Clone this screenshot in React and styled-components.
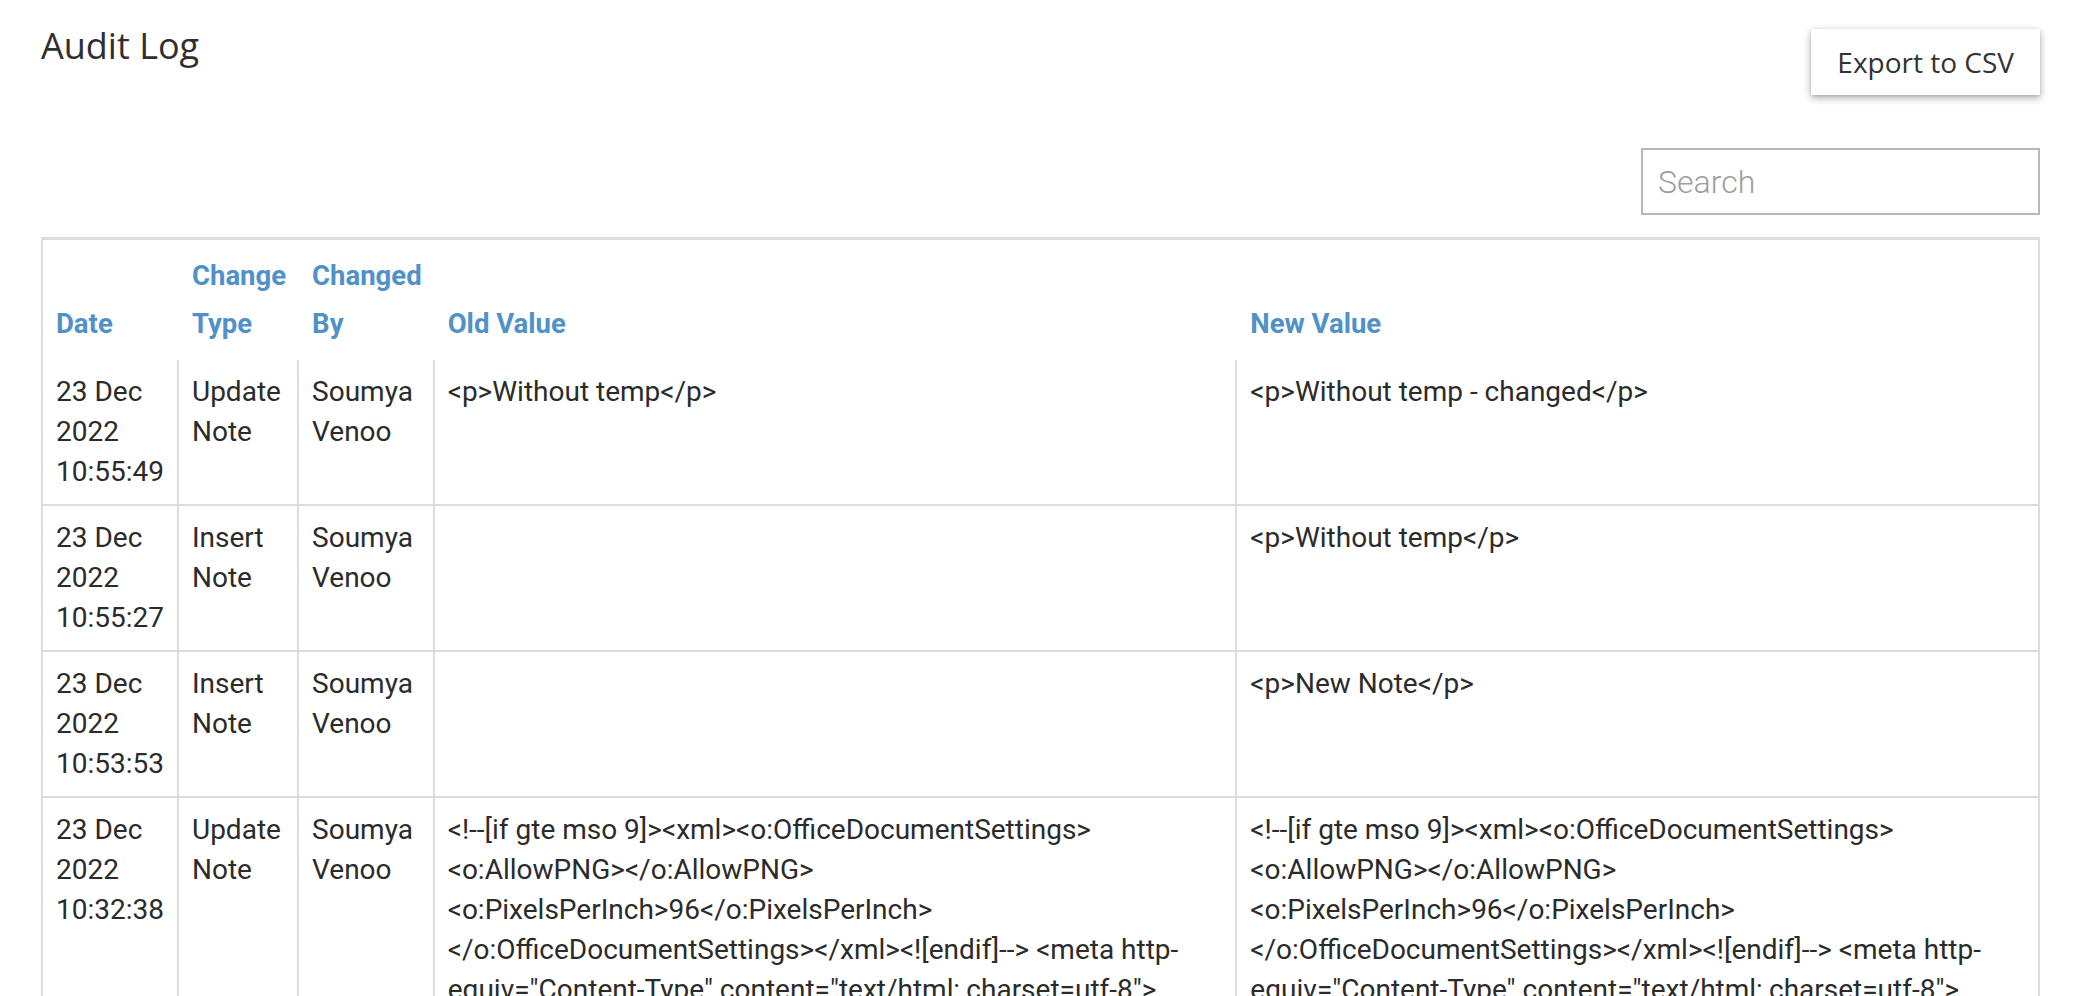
import React from "react";
import styled, { createGlobalStyle } from "styled-components";

const GlobalStyle = createGlobalStyle`
  html, body {
    margin: 0;
    padding: 0;
    background: #fff;
  }
  body {
    font-family: Roboto, "Liberation Sans", sans-serif;
    color: #333;
  }
`;

const Page = styled.div`
  padding: 21px 52px 0 41px;
`;

const TopBar = styled.div`
  display: flex;
  justify-content: space-between;
  align-items: flex-start;
`;

const Title = styled.h1`
  margin: 0;
  font-family: "Open Sans", "Liberation Sans", sans-serif;
  font-weight: 400;
  font-size: 36px;
  line-height: 50px;
  color: #2f2f2f;
`;

const ExportButton = styled.button`
  margin-top: 8px;
  height: 66px;
  padding: 0 26px;
  display: inline-flex;
  align-items: center;
  border: none;
  background: #fff;
  font-family: "Open Sans", "Liberation Sans", sans-serif;
  font-size: 28px;
  color: #333;
  box-shadow: 0 3px 8px rgba(0, 0, 0, 0.3), 0 1px 3px rgba(0, 0, 0, 0.12);
  cursor: pointer;
`;

const SearchRow = styled.div`
  display: flex;
  justify-content: flex-end;
  margin-top: 53px;
`;

const SearchInput = styled.input`
  box-sizing: border-box;
  width: 399px;
  height: 67px;
  padding: 0 15px;
  border: 2px solid #b8b8b8;
  font-family: Roboto, "Liberation Sans", sans-serif;
  font-weight: 300;
  font-size: 32px;
  color: #333;
  outline: none;
  &::placeholder {
    color: #9e9e9e;
  }
`;

const Table = styled.table`
  width: 100%;
  margin-top: 22px;
  border-collapse: separate;
  border-spacing: 0;
  border: 2px solid #ddd;
  border-top-width: 3px;
`;

const Th = styled.th`
  width: ${(props) => (props.narrow ? "1px" : "auto")};
  padding: 12px 13px;
  text-align: left;
  vertical-align: bottom;
  font-weight: 700;
  font-size: 27.5px;
  line-height: 48px;
  color: #5091c9;
`;

const Td = styled.td`
  padding: 12px 13px;
  vertical-align: top;
  font-size: 28px;
  line-height: 40px;
  color: #2b2b2b;
  border-bottom: 2px solid #ddd;
  border-right: 2px solid #ddd;
  &:last-child {
    border-right: none;
  }
`;

const longHtml =
  '<!--[if gte mso 9]><xml><o:OfficeDocumentSettings> <o:AllowPNG></o:AllowPNG> <o:PixelsPerInch>96</o:PixelsPerInch> </o:OfficeDocumentSettings></xml><![endif]--> <meta http-equiv="Content-Type" content="text/html; charset=utf-8"> <meta name="ProgId" content="Word.Document"> <meta name="Generator" content="Microsoft Word 15"> <meta name="Originator" content="Microsoft Word 15">';

const rows = [
  {
    date: "23 Dec 2022 10:55:49",
    type: "Update Note",
    by: "Soumya Venoo",
    oldValue: "<p>Without temp</p>",
    newValue: "<p>Without temp - changed</p>",
  },
  {
    date: "23 Dec 2022 10:55:27",
    type: "Insert Note",
    by: "Soumya Venoo",
    oldValue: "",
    newValue: "<p>Without temp</p>",
  },
  {
    date: "23 Dec 2022 10:53:53",
    type: "Insert Note",
    by: "Soumya Venoo",
    oldValue: "",
    newValue: "<p>New Note</p>",
  },
  {
    date: "23 Dec 2022 10:32:38",
    type: "Update Note",
    by: "Soumya Venoo",
    oldValue: longHtml,
    newValue: longHtml,
  },
];

export default function App() {
  return (
    <>
      <GlobalStyle />
      <Page>
        <TopBar>
          <Title>Audit Log</Title>
          <ExportButton>Export to CSV</ExportButton>
        </TopBar>
        <SearchRow>
          <SearchInput placeholder="Search" />
        </SearchRow>
        <Table>
          <thead>
            <tr>
              <Th narrow>Date</Th>
              <Th narrow>Change Type</Th>
              <Th narrow>Changed By</Th>
              <Th>Old Value</Th>
              <Th>New Value</Th>
            </tr>
          </thead>
          <tbody>
            {rows.map((row, i) => (
              <tr key={i}>
                <Td>{row.date}</Td>
                <Td>{row.type}</Td>
                <Td>{row.by}</Td>
                <Td>{row.oldValue}</Td>
                <Td>{row.newValue}</Td>
              </tr>
            ))}
          </tbody>
        </Table>
      </Page>
    </>
  );
}
